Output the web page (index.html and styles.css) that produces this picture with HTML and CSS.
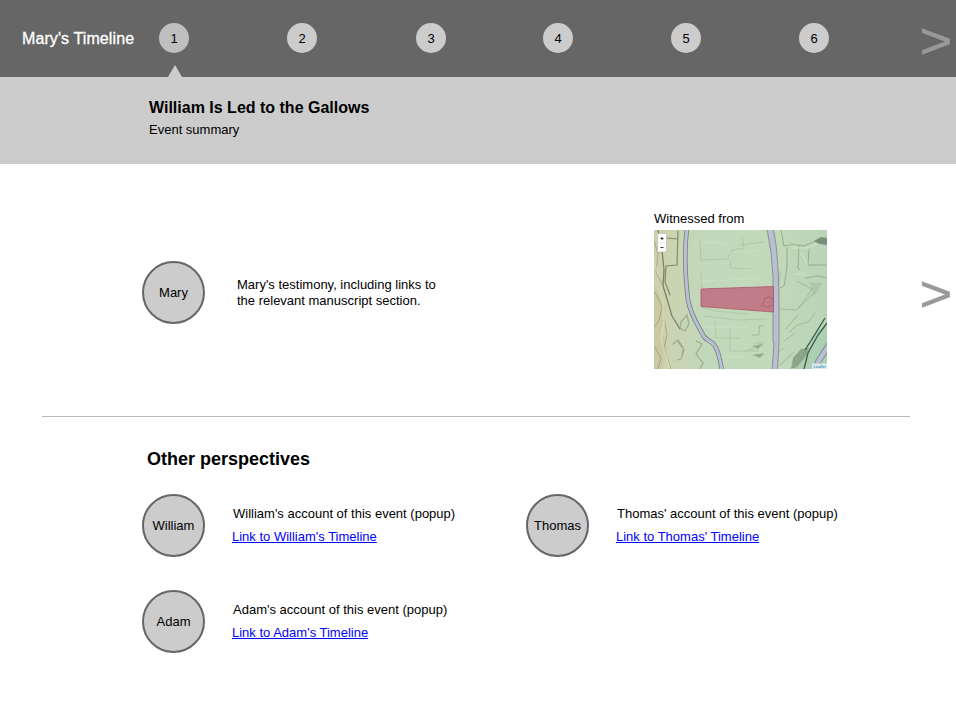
FILE: index.html
```html
<!DOCTYPE html>
<html lang="en">
<head>
<meta charset="utf-8">
<title>Mary's Timeline</title>
<link rel="stylesheet" href="styles.css">
</head>
<body>
<header class="timeline">
  <div class="timeline-title">Mary's Timeline</div>
  <nav class="steps">
    <span class="step current">1</span>
    <span class="step">2</span>
    <span class="step third">3</span>
    <span class="step">4</span>
    <span class="step">5</span>
    <span class="step">6</span>
  </nav>
  <div class="next">&gt;</div>
</header>
<section class="event">
  <h1>William Is Led to the Gallows</h1>
  <p>Event summary</p>
</section>
<main>
  <section class="testimony">
    <div class="person">Mary</div>
    <p class="quote">Mary's testimony, including links to<br>the relevant manuscript section.</p>
    <figure class="witness">
      <figcaption>Witnessed from</figcaption>
      <svg class="map" width="173" height="139" viewBox="0 0 173 139">
        <defs>
          <linearGradient id="land" x1="0" y1="0" x2="1" y2="0">
            <stop offset="0" stop-color="#d0d0ac"/>
            <stop offset=".13" stop-color="#c8d5b2"/>
            <stop offset=".3" stop-color="#c2d8bb"/>
            <stop offset=".72" stop-color="#c2d9b9"/>
            <stop offset="1" stop-color="#b9d4b8"/>
          </linearGradient>
          <filter id="soft"><feGaussianBlur stdDeviation=".6"/></filter>
        </defs>
        <rect width="173" height="139" fill="url(#land)"/>
        <g filter="url(#soft)" fill="none" stroke-linecap="round">
          <path d="M163 101 140 139H173V95Z" fill="#abcfb3"/>
          <path d="M0 52 5 65 12 80 7 100 14 118 8 139H0Z" fill="#c5c29b" opacity=".55"/>
          <path d="M1 62 8 77 5 91 0 97M0 10 4 24 2 42 8 54M10 88 13 105 10 118 17 139M1 117 7 128 4 139" stroke="#898462" opacity=".55"/>
          <path d="M9 70 10 92 7 109 15 137M0 33 5 45" stroke="#dcdab3" stroke-width="2" opacity=".7"/>
          <path d="M4 0 8 20 10 40 9 56 13 69 18 86 26 99" stroke="#6e7458" stroke-width="1.3" opacity=".85"/>
          <path d="M24 1 23 35 12 36 11 52 16 65M12 8 24 9" stroke="#757e5f" stroke-width="1.2" opacity=".85"/>
          <path d="M27 92 33 85 35 94 31 101 26 98ZM24 112 30 120 27 129 23 130M19 114 24 110 29 118 28 126M42 111 48 114 42 124 49 133 46 139" stroke="#8d9e7f" stroke-width="1.2" opacity=".75"/>
          <path d="M46 10 47 30 73 29 78 20 90 18 88 7M76 31 77 38 107 40M86 15 109 12M47 42 48 58M48 77 61 81 94 84M50 86 82 90 112 89M61 91 62 108 85 108M76 98 76 121 105 121M92 121 109 115M100 113 110 113M99 125 110 125" stroke="#a1b796" opacity=".5"/>
          <path d="M98 105H105V96H109" stroke="#9eb494" stroke-width=".9"/>
          <path d="M49 12 72 13 76 23M50 34 74 33M80 22 105 21M52 97 94 97M91 40 110 40M48 51 105 48M63 127 90 127" stroke="#cedfbf" stroke-width="2" opacity=".5"/>
          <path d="M98 116 109 114 104 119ZM99 125 110 123 106 128Z" fill="#839b7c" opacity=".7"/>
          <path d="M127 0 130 16 136 15M133 18 133 38 130 56 126 58M137 14 150 16 162 11 173 12M145 16 144 38 146 40M155 19 154 35 172 35M151 48 164 46 173 48" stroke="#869f81" opacity=".75"/>
          <path d="M143 51 158 59 150 71 145 78M157 66 161 62M126 79 142 80 158 65M136 102 143 95 154 92 161 83M130 111 141 103M124 122 130 118" stroke="#869f81" opacity=".5"/>
          <path d="M138 18 153 18 165 13M148 24 153 34M143 44 150 44" stroke="#d4e1bd" stroke-width="2" opacity=".6"/>
          <path d="M160 11 167 7 173 8V15L165 14Z" fill="#6d806b" opacity=".8"/>
          <path d="M155 52 169 53 160 66Z" fill="#a0b99d" opacity=".5"/>
          <path d="M139 128 147 119 155 118 152 126 143 137 137 139Z" fill="#879f82" opacity=".9"/>
          <path d="M126 135 139 123M143 86 132 99M126 42 124 58" stroke="#a4b896" stroke-width="1.3" opacity=".6"/>
        </g>
        <path d="M173 93 164 105 154 123 150 139M171 88 158 109 151 120" fill="none" stroke="#3e5944" stroke-width="1.3"/>
        <g fill="none">
          <path d="M33-2C30 22 31 45 34 70 37 86 44 95 49 105 52 112 60 110 63 120Q66 128 68 141" stroke="#767e87" stroke-width="4.6"/>
          <path d="M33-2C30 22 31 45 34 70 37 86 44 95 49 105 52 112 60 110 63 120Q66 128 68 141" stroke="#b8c0d1" stroke-width="3"/>
          <path d="M177 112 171 121 164 132 160 143" stroke="#737f86" stroke-width="6"/>
          <path d="M177 112 171 121 164 132 160 143" stroke="#b8c0d1" stroke-width="4.4"/>
        </g>
        <path d="M113-1Q118 21 119 47L119 110 120 114 118 140H123.5L125 111 125 70Q124 15 119-1Z" fill="#b8c0d1" stroke="#808a93" stroke-width=".9"/>
        <path d="M47 59 119.500 56.500V82L47 76.500Z" fill="#c17d87" stroke="#a85468" stroke-width=".8"/>
        <path d="M110 68H113V67H116V68H119V76H115V77H112V76H108V73H110Z" fill="none" stroke="#a76070" stroke-width=".8"/>
        <rect x="3.500" y="3.500" width="9" height="18.500" rx="1" fill="#fff" stroke="#aaa" stroke-width=".5"/>
        <path d="M4 13H12" stroke="#ccc" stroke-width=".5"/>
        <path d="M6.500 8.500H9.500M8 7V10M6.500 17.500H9.500" stroke="#333" stroke-width="1"/>
        <rect x="158" y="133.500" width="15" height="5.500" fill="#dcebea"/>
        <text class="credit" x="159.500" y="138" textLength="12">Leaflet</text>
      </svg>
    </figure>
    <div class="next">&gt;</div>
  </section>
  <section class="others">
    <h2>Other perspectives</h2>
    <div class="people">
      <article>
        <div class="person">William</div>
        <div class="account"><p>William's account of this event (popup)</p><a href="#">Link to William's Timeline</a></div>
      </article>
      <article>
        <div class="person">Thomas</div>
        <div class="account"><p>Thomas' account of this event (popup)</p><a href="#">Link to Thomas' Timeline</a></div>
      </article>
      <article>
        <div class="person">Adam</div>
        <div class="account"><p>Adam's account of this event (popup)</p><a href="#">Link to Adam's Timeline</a></div>
      </article>
    </div>
  </section>
</main>
</body>
</html>
```
FILE: styles.css
```css
* { box-sizing: border-box; }
body {
  margin: 0;
  background: #fff;
  color: #000;
  font: 13px/16px "Liberation Sans", Arial, sans-serif;
}
h1, h2, p, figure { margin: 0; }
.timeline {
  display: flex;
  align-items: flex-start;
  height: 77px;
  padding-left: 22px;
  background: #666;
}
.timeline-title {
  width: 137px;
  padding-top: 30px;
  color: #fff;
  font-size: 16px;
  line-height: 18px;
  letter-spacing: .1px;
  -webkit-text-stroke: .3px #fff;
}
.steps {
  display: grid;
  grid-template-columns: repeat(6, 128px);
  width: 763px;
  padding-top: 23px;
}
.step {
  position: relative;
  width: 30px;
  height: 30px;
  border-radius: 50%;
  background: #ccc;
  line-height: 31px;
  text-align: center;
}
.third { margin-left: 1px; }
.current { background: #bfbfbf; }
.current::after {
  content: "";
  position: absolute;
  left: 9px;
  top: 42px;
  border: solid transparent;
  border-width: 0 7px 12px;
  border-bottom-color: #ccc;
}
.next {
  color: #999;
  font-size: 56px;
  line-height: 64px;
  -webkit-text-stroke: .7px #999;
  transform: scaleY(.88);
}
.timeline .next { margin: 9px 0 0 -2.5px; }
.event {
  height: 87px;
  padding: 21px 0 0 149px;
  background: #ccc;
}
.event h1 { font-size: 16px; line-height: 19px; }
.event p { margin-top: 5px; }
.testimony {
  display: flex;
  align-items: flex-start;
  height: 252px;
  padding-left: 142px;
}
.person {
  flex: none;
  width: 63px;
  height: 63px;
  border: 2px solid #666;
  border-radius: 50%;
  background: #ccc;
  line-height: 60px;
  text-align: center;
}
.testimony .person { margin-top: 97px; }
.quote { width: 417px; margin: 113px 0 0 32px; }
.witness { width: 173px; margin-top: 47px; }
.witness figcaption { height: 19px; }
.map { display: block; }
.credit { font-size: 4px; fill: #0078a8; }
.testimony .next { margin: 98px 0 0 92.5px; }
.others {
  margin: 0 46px 0 42px;
  padding: 32px 0 0 100px;
  border-top: 1px solid #bbb;
}
.others h2 { margin-left: 5px; font-size: 18px; line-height: 21px; }
.people {
  display: grid;
  grid-template-columns: 384px 384px;
  row-gap: 33px;
  margin-top: 24px;
}
article { display: flex; }
.account { padding: 12px 0 0 28px; }
.account a {
  display: block;
  margin: 7px 0 0 -1px;
  color: #00f;
  text-decoration: underline;
}
```
